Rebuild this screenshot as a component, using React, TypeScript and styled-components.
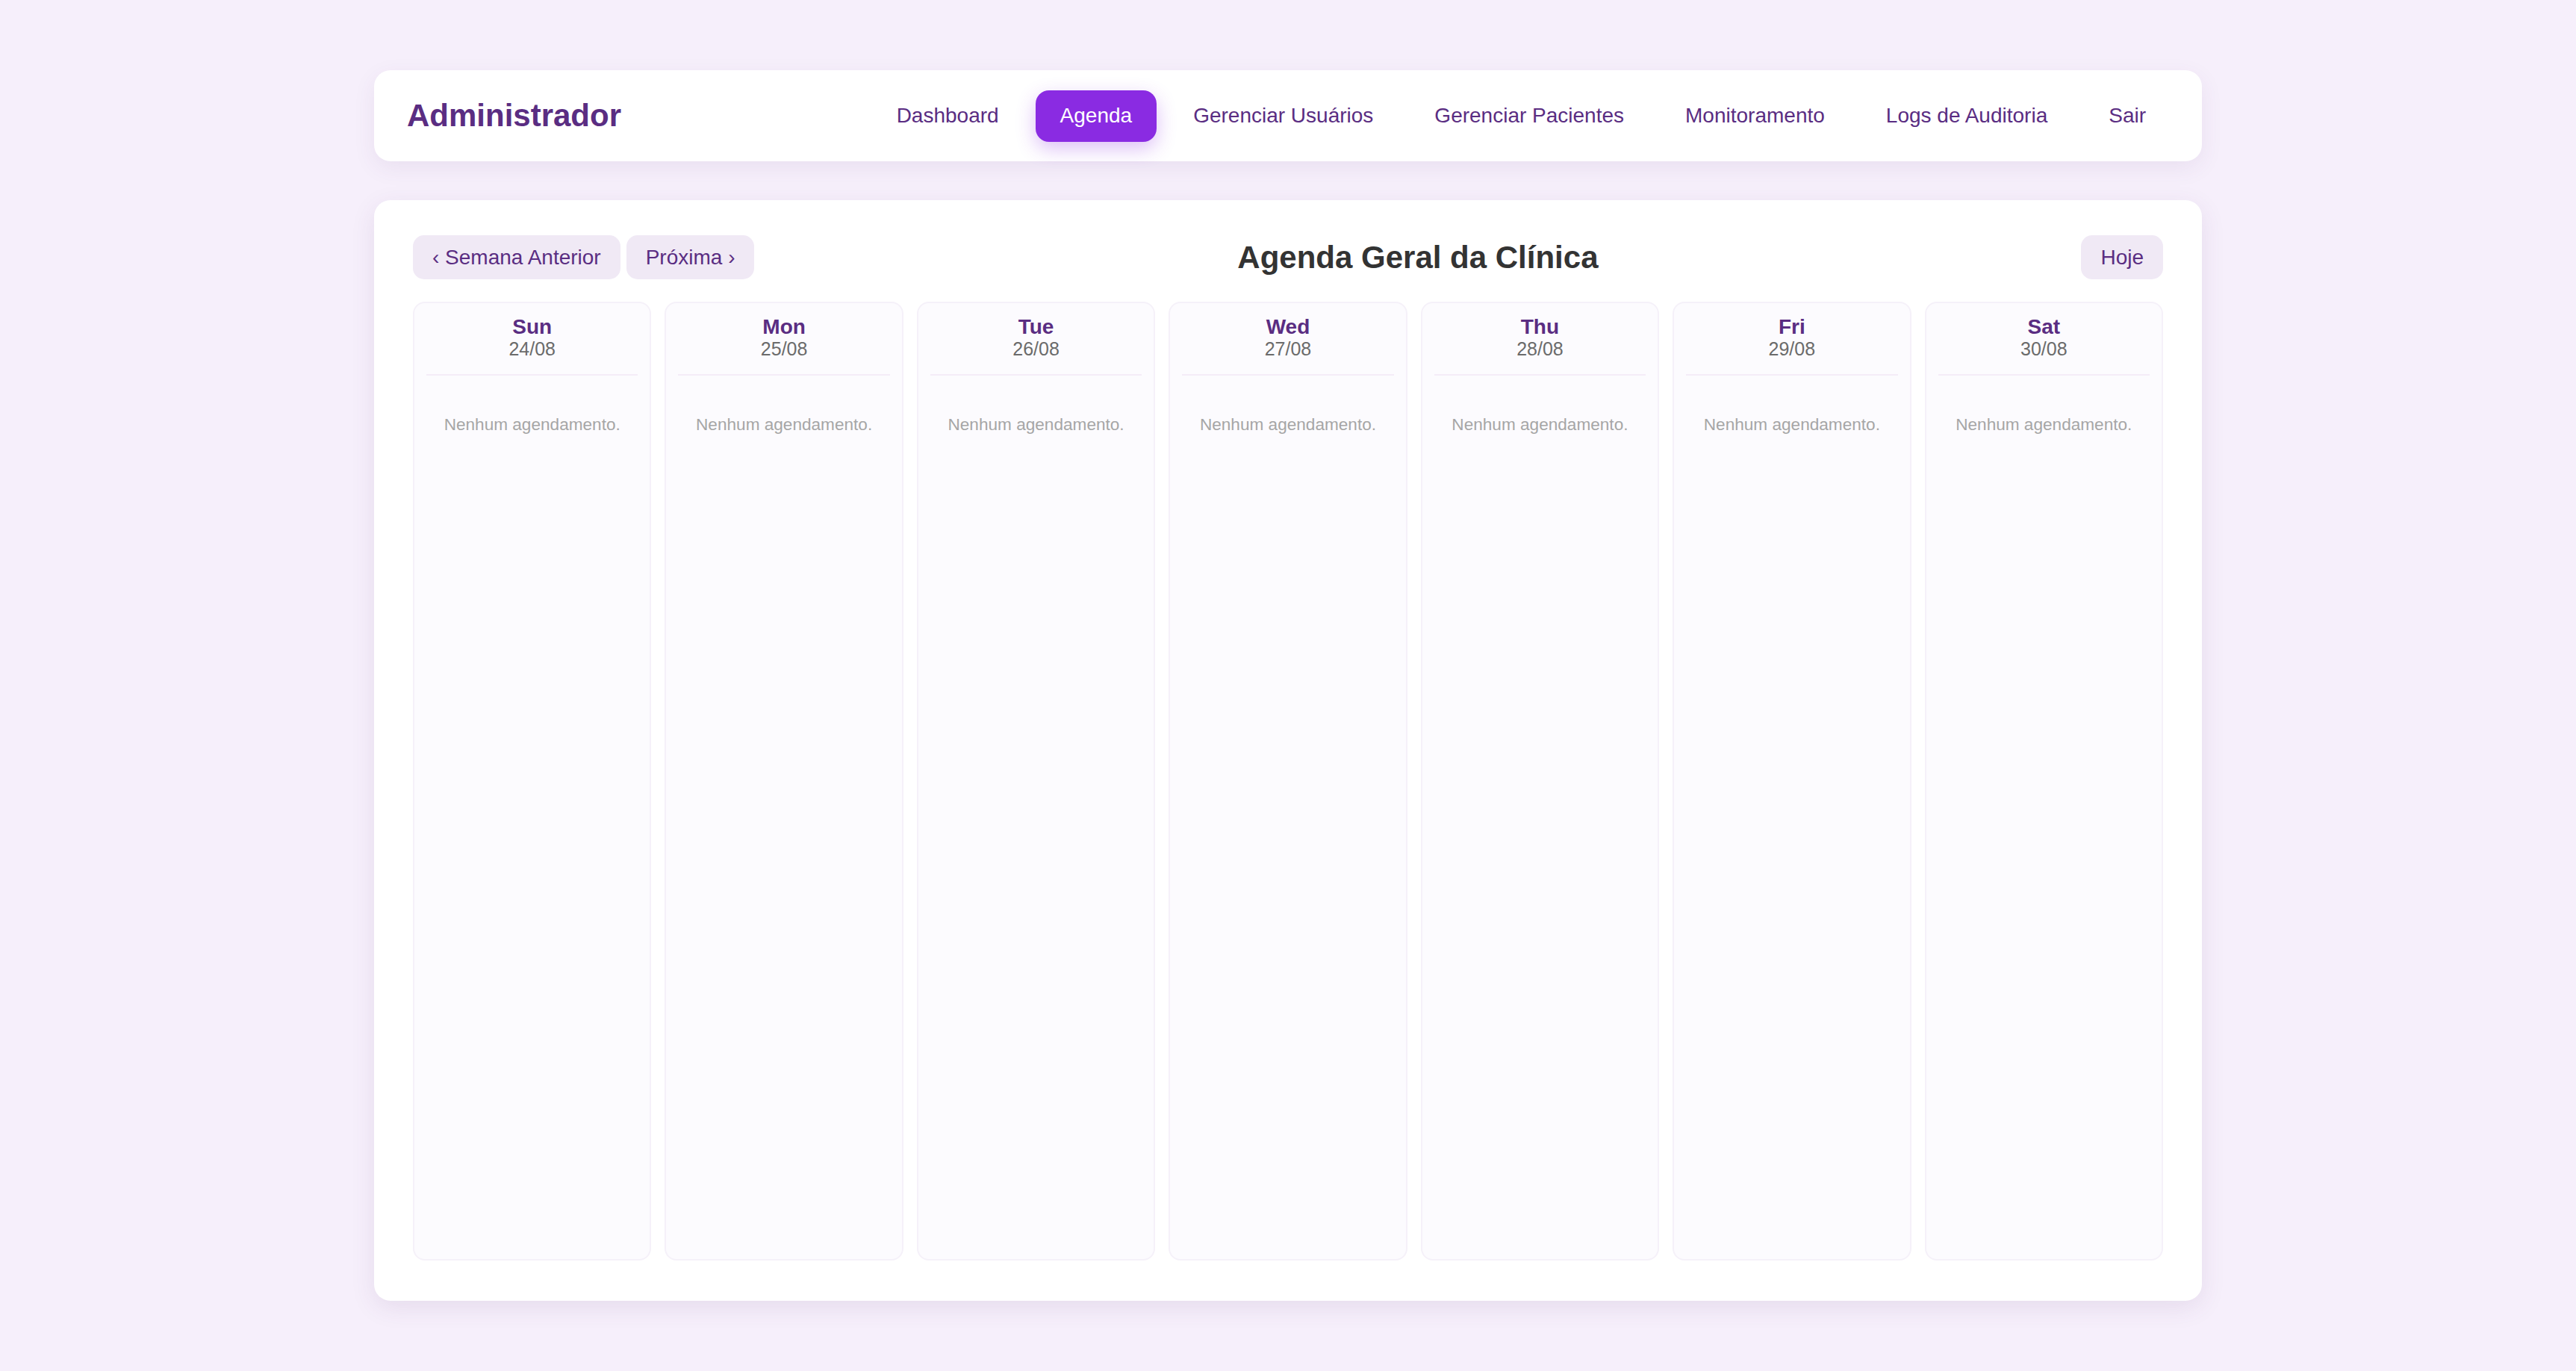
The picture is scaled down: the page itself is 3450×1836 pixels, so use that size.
import React from "react";
import styled, { createGlobalStyle } from "styled-components";

const GlobalStyle = createGlobalStyle`
  html, body {
    margin: 0;
    padding: 0;
  }
  body {
    background-color: #f6effb;
    font-family: "Liberation Sans", Arial, sans-serif;
  }
  * {
    box-sizing: border-box;
  }
`;

// page wrapper
const Page = styled.div`
  min-height: 100vh;
  padding: 94px 0;
  display: flex;
  flex-direction: column;
  align-items: center;
  gap: 52px;
`;

// top navigation bar
const Header = styled.header`
  width: 2448px;
  display: flex;
  align-items: center;
  justify-content: space-between;
  padding: 26.5px 42px 26.5px 44px;
  background-color: #ffffff;
  border-radius: 22px;
  box-shadow: 0 9px 30px rgba(90, 50, 110, 0.08);
`;

const Brand = styled.h1`
  margin: 0;
  font-size: 42px;
  font-weight: 700;
  color: #5a2d82;
`;

const Nav = styled.nav`
  display: flex;
  align-items: center;
  gap: 16px;
`;

const NavLink = styled.a<{ $active?: boolean }>`
  display: block;
  padding: 17.6px 33px;
  font-size: 28px;
  line-height: 34px;
  border-radius: 18px;
  text-decoration: none;
  cursor: pointer;
  color: ${(p) => (p.$active ? "#ffffff" : "#5a2d82")};
  background-color: ${(p) => (p.$active ? "#8a2be2" : "transparent")};
  box-shadow: ${(p) => (p.$active ? "0 9px 26px rgba(138, 43, 226, 0.3)" : "none")};
`;

// main agenda card
const Card = styled.main`
  width: 2448px;
  flex: 1;
  display: flex;
  flex-direction: column;
  padding: 47px 52px 54px;
  background-color: #ffffff;
  border-radius: 22px;
  box-shadow: 0 9px 33px rgba(90, 50, 110, 0.1);
`;

const Toolbar = styled.div`
  display: flex;
  align-items: center;
  justify-content: space-between;
  height: 59px;
  margin-bottom: 30px;
`;

const ButtonGroup = styled.div`
  display: flex;
  gap: 8px;
`;

const WeekButton = styled.button`
  border: none;
  padding: 13.5px 26px;
  font-family: inherit;
  font-size: 28px;
  line-height: 32px;
  color: #5a2d82;
  background-color: #f0e9f5;
  border-radius: 15px;
  cursor: pointer;
`;

const Title = styled.h2`
  margin: 0;
  font-size: 42px;
  font-weight: 700;
  color: #333333;
`;

const WeekGrid = styled.div`
  flex: 1;
  display: grid;
  grid-template-columns: repeat(7, 1fr);
  gap: 18px;
`;

const DayColumn = styled.div`
  display: flex;
  flex-direction: column;
  padding: 16px;
  background-color: #fcfbfe;
  border: 2px solid #f5f1f9;
  border-radius: 16px;
`;

const DayHead = styled.div`
  text-align: center;
  padding-bottom: 20px;
  border-bottom: 2px solid #f4ecf8;
`;

const DayName = styled.div`
  font-size: 28px;
  line-height: 31px;
  font-weight: 700;
  color: #5a2d82;
`;

const DayDate = styled.div`
  font-size: 25px;
  line-height: 28px;
  color: #6b6b6b;
`;

const Empty = styled.p`
  margin: 53px 0 0;
  text-align: center;
  font-size: 22.6px;
  color: #a6a6a6;
`;

const links = [
  "Dashboard",
  "Agenda",
  "Gerenciar Usuários",
  "Gerenciar Pacientes",
  "Monitoramento",
  "Logs de Auditoria",
  "Sair",
];

const days = [
  { name: "Sun", date: "24/08" },
  { name: "Mon", date: "25/08" },
  { name: "Tue", date: "26/08" },
  { name: "Wed", date: "27/08" },
  { name: "Thu", date: "28/08" },
  { name: "Fri", date: "29/08" },
  { name: "Sat", date: "30/08" },
];

const App: React.FC = () => {
  return (
    <>
      <GlobalStyle />
      <Page>
        <Header>
          <Brand>Administrador</Brand>
          <Nav>
            {links.map((label) => (
              <NavLink key={label} $active={label === "Agenda"}>
                {label}
              </NavLink>
            ))}
          </Nav>
        </Header>

        <Card>
          <Toolbar>
            <ButtonGroup>
              <WeekButton>‹ Semana Anterior</WeekButton>
              <WeekButton>Próxima ›</WeekButton>
            </ButtonGroup>
            <Title>Agenda Geral da Clínica</Title>
            <WeekButton>Hoje</WeekButton>
          </Toolbar>

          <WeekGrid>
            {days.map((d) => (
              <DayColumn key={d.name}>
                <DayHead>
                  <DayName>{d.name}</DayName>
                  <DayDate>{d.date}</DayDate>
                </DayHead>
                <Empty>Nenhum agendamento.</Empty>
              </DayColumn>
            ))}
          </WeekGrid>
        </Card>
      </Page>
    </>
  );
};

export default App;
